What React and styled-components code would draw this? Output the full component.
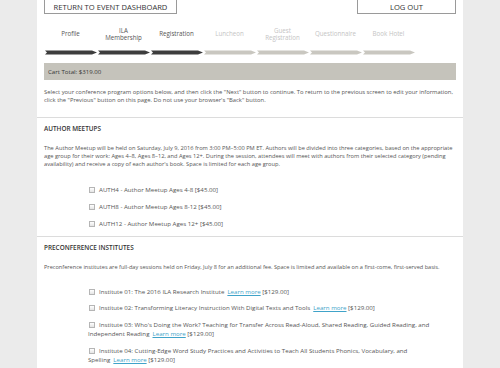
import React from 'react';
import styled, { createGlobalStyle } from 'styled-components';

const GlobalStyle = createGlobalStyle`
  body {
    margin: 0;
    background: #ebebeb;
    font-family: "Open Sans", "Liberation Sans", sans-serif;
    color: #555;
  }
`;

const Page = styled.div`
  width: 426px;
  height: 368px;
  margin: 0 auto;
  background: #fff;
  overflow: hidden;
`;

const TopBar = styled.div`
  display: flex;
  justify-content: space-between;
  padding: 0 7px;
  margin-top: -6px;
`;

const OutlineButton = styled.button`
  width: ${(p) => p.$w}px;
  height: 20px;
  padding: 5px 0 0;
  border: 1px solid #9a9a9a;
  background: #fff;
  color: #333;
  font-family: "Open Sans", "Liberation Sans", sans-serif;
  font-size: 7.6px;
  line-height: 10px;
  white-space: nowrap;
`;

const Steps = styled.div`
  display: flex;
  margin: 12px 7px 0;
`;

const Step = styled.div`
  width: 53px;
  display: flex;
  flex-direction: column;
  align-items: center;
`;

const StepLabel = styled.div`
  height: 16px;
  display: flex;
  align-items: center;
  text-align: center;
  font-size: 6.2px;
  line-height: 7.5px;
  color: ${(p) => (p.$done ? '#555' : '#c4c4c4')};
`;

const Arrow = styled.svg`
  display: block;
  margin-top: 8px;
  margin-left: 1px;
`;

const CartBar = styled.div`
  margin: 8px 7px 0;
  height: 17px;
  background: #c5c3bb;
  display: flex;
  align-items: center;
  padding-left: 4px;
  font-size: 6.1px;
  color: #333;
`;

const Intro = styled.p`
  margin: 8px 7px 13px;
  font-size: 5.85px;
  line-height: 8px;
  color: #555;
`;

const Section = styled.section`
  border-top: 1px solid #dcdcdc;
  padding: 7px 7px 0;
`;

const SectionTitle = styled.h2`
  margin: 0;
  font-size: 6.4px;
  line-height: 8px;
  font-weight: 600;
  color: #333;
`;

const SectionText = styled.p`
  margin: 11px 0 0;
  font-size: ${(p) => p.$fs}px;
  line-height: 8px;
  color: #555;
`;

const Options = styled.div`
  margin: ${(p) => p.$mt}px 16px 0 44px;
`;

const Option = styled.div`
  font-size: 6.15px;
  line-height: 9px;
  color: #555;
  margin-bottom: ${(p) => p.$gap || 8}px;
`;

const Box = styled.span`
  display: inline-block;
  width: 4px;
  height: 4px;
  border: 1px solid #b5b5b5;
  background: linear-gradient(#fff, #e4e4e4);
  margin: 0 4px 0 1px;
  vertical-align: -0.5px;
`;

const Link = styled.a`
  color: #40a3c9;
  text-decoration: underline;
  margin-left: 3px;
`;

const steps = [
  ['Profile', true],
  ['ILA Membership', true],
  ['Registration', true],
  ['Luncheon', false],
  ['Guest Registration', false],
  ['Questionnaire', false],
  ['Book Hotel', false],
];

const institutes = [
  'Institute 01: The 2016 ILA Research Institute',
  'Institute 02: Transforming Literacy Instruction With Digital Texts and Tools',
  "Institute 03: Who's Doing the Work? Teaching for Transfer Across Read-Aloud, Shared Reading, Guided Reading, and Independent Reading",
  'Institute 04: Cutting-Edge Word Study Practices and Activities to Teach All Students Phonics, Vocabulary, and Spelling',
];

export default function App() {
  return (
    <>
      <GlobalStyle />
      <Page>
        <TopBar>
          <OutlineButton $w={133}>RETURN TO EVENT DASHBOARD</OutlineButton>
          <OutlineButton $w={99}>LOG OUT</OutlineButton>
        </TopBar>

        <Steps>
          {steps.map(([label, done]) => (
            <Step key={label}>
              <StepLabel $done={done}>
                {label === 'ILA Membership' ? <>ILA<br />Membership</> : label === 'Guest Registration' ? <>Guest<br />Registration</> : label}
              </StepLabel>
              <Arrow width="53" height="5" viewBox="0 0 53 5">
                <polygon
                  points="0,0.5 47,0.5 52,2.5 47,4.5 0,4.5 2,2.5"
                  fill={done ? '#3d3d3d' : '#c9c7c0'}
                />
              </Arrow>
            </Step>
          ))}
        </Steps>

        <CartBar>Cart Total: $319.00</CartBar>

        <Intro>
          Select your conference program options below, and then click the "Next" button to continue. To return to the previous screen to edit your information, click the "Previous" button on this page. Do not use your browser's "Back" button.
        </Intro>

        <Section>
          <SectionTitle>AUTHOR MEETUPS</SectionTitle>
          <SectionText $fs={5.7}>
            The Author Meetup will be held on Saturday, July 9, 2016 from 3:00 PM–5:00 PM ET. Authors will be divided into three categories, based on the appropriate age group for their work: Ages 4–8, Ages 8–12, and Ages 12+. During the session, attendees will meet with authors from their selected category (pending availability) and receive a copy of each author's book. Space is limited for each age group.
          </SectionText>
          <Options $mt={17}>
            <Option><Box />AUTH4 - Author Meetup Ages 4-8 [$45.00]</Option>
            <Option><Box />AUTH8 - Author Meetup Ages 8-12 [$45.00]</Option>
            <Option><Box />AUTH12 - Author Meetup Ages 12+ [$45.00]</Option>
          </Options>
        </Section>

        <Section>
          <SectionTitle>PRECONFERENCE INSTITUTES</SectionTitle>
          <SectionText $fs={5.6}>
            Preconference institutes are full-day sessions held on Friday, July 8 for an additional fee. Space is limited and available on a first-come, first-served basis.
          </SectionText>
          <Options $mt={16}>
            {institutes.map((t, i) => (
              <Option key={t} $gap={i === 0 ? 7 : 8}>
                <Box />{t}<Link>Learn more</Link> [$129.00]
              </Option>
            ))}
          </Options>
        </Section>
      </Page>
    </>
  );
}
